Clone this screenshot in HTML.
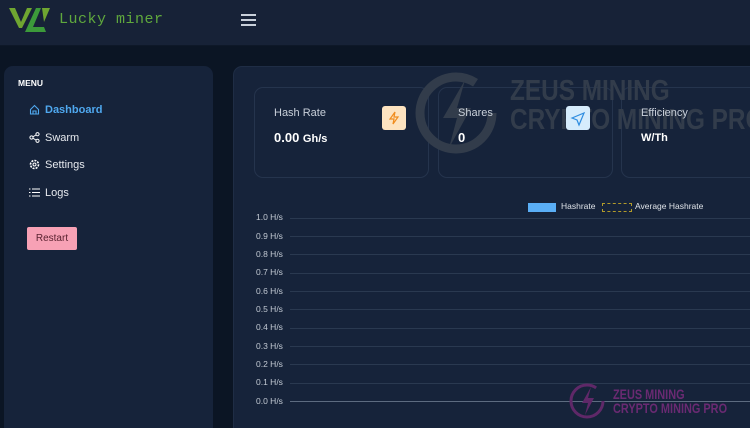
<!DOCTYPE html>
<html><head><style>
html,body{margin:0;width:750px;height:428px;overflow:hidden}
body{background:#0b1524;font-family:"Liberation Sans",sans-serif}
#w{position:relative;width:750px;height:428px;overflow:hidden}
.hdr{position:absolute;left:0;top:0;width:750px;height:45px;background:#172237;border-bottom:1px solid #0e1828}
.side{position:absolute;left:4px;top:66px;width:209px;height:370px;background:#16233a;border-radius:9px}
.main{position:absolute;left:233px;top:66px;width:530px;height:370px;background:#16233a;border-radius:9px;border:1px solid #1f2d45}
.card{position:absolute;top:20px;height:89px;border:1px solid #25344d;border-radius:9px}
.t{position:absolute;color:#c9d0da;font-size:11px}
.v{position:absolute;color:#fff;font-size:13px;font-weight:bold}
.ic{position:absolute;width:24px;height:24px;border-radius:3px}
.m{position:absolute;font-size:11px;color:#e6e9ee}
.mi{position:absolute;left:25px}
.gl{position:absolute;left:290px;width:460px;height:1px;background:#2a3950}
.gt{position:absolute;left:256px;font-size:8.5px;color:#c2c9d3}
</style></head><body><div id="w">
<div class="hdr">
<svg style="position:absolute;left:8px;top:4px" width="45" height="30" viewBox="0 0 45 30"><path d="M1 4h6l6 14 6-14h5l-10 20h-3z" fill="#6fa631"/><path d="M17 28l11-24h5l-8 19h11l2 5z" fill="#3c9a3a"/><path d="M34 4h8l-6 14z" fill="#6fa631"/></svg>
<div style="position:absolute;left:59px;top:11px;color:#5fa83d;font-family:'Liberation Mono',monospace;font-size:15px;letter-spacing:0.5px">Lucky miner</div>
<div style="position:absolute;left:241px;top:14px;width:15px">
<div style="height:2px;background:#c9d0da;margin-bottom:3px"></div><div style="height:2px;background:#c9d0da;margin-bottom:3px"></div><div style="height:2px;background:#c9d0da"></div></div>
</div>
<div class="side">
<div style="position:absolute;left:14px;top:12px;color:#fff;font-size:8.5px;font-weight:bold">MENU</div>
<svg class="mi" style="top:38px" width="11" height="11" viewBox="0 0 11 11"><path d="M1.5 5.5L5.5 1.5 9.5 5.5V10H1.5z M4 10V7h3v3" fill="none" stroke="#4fa8ef" stroke-width="1.1"/></svg>
<div class="m" style="left:41px;top:38px;color:#4fa8ef;font-weight:bold">Dashboard</div>
<svg class="mi" style="top:66px" width="11" height="11" viewBox="0 0 11 11"><circle cx="2.5" cy="5.5" r="1.6" fill="none" stroke="#fff"/><circle cx="8.5" cy="2.2" r="1.6" fill="none" stroke="#fff"/><circle cx="8.5" cy="8.8" r="1.6" fill="none" stroke="#fff"/><path d="M4 4.7l3-1.7M4 6.3l3 1.7" stroke="#fff"/></svg>
<div class="m" style="left:41px;top:66px">Swarm</div>
<svg class="mi" style="top:93px" width="11" height="11" viewBox="0 0 11 11"><circle cx="5.5" cy="5.5" r="4" fill="none" stroke="#fff" stroke-width="1.6" stroke-dasharray="2 1.1"/><circle cx="5.5" cy="5.5" r="1.5" fill="none" stroke="#fff"/></svg>
<div class="m" style="left:41px;top:93px">Settings</div>
<svg class="mi" style="top:121px" width="11" height="11" viewBox="0 0 11 11"><path d="M0 2h1.5M0 5.5h1.5M0 9h1.5M3 2h8M3 5.5h8M3 9h8" stroke="#fff" stroke-width="1.1"/></svg>
<div class="m" style="left:41px;top:121px">Logs</div>
<div style="position:absolute;left:23px;top:161px;width:50px;height:23px;background:#f7a1b5;border-radius:2px;color:#5a2230;font-size:10px;text-align:center;line-height:23px">Restart</div>
</div>
<div class="main">
<div class="card" style="left:20px;width:173px"></div>
<div class="card" style="left:204px;width:173px"></div>
<div class="card" style="left:387px;width:200px"></div>
</div>
<svg style="position:absolute;left:413px;top:68px" width="90" height="90" viewBox="0 0 90 90"><circle cx="43" cy="45" r="36" fill="none" stroke="#323c4b" stroke-width="9" stroke-dasharray="190 36"/><path d="M52 12L30 50h14l-8 30 22-40H44z" fill="#323c4b"/></svg>
<div style="position:absolute;left:510px;top:77px;color:#323c4b;font-size:29px;font-weight:bold;line-height:29px;white-space:nowrap;transform:scaleX(0.84);transform-origin:0 0">ZEUS MINING<br>CRYPTO MINING PRO</div>
<div class="t" style="left:274px;top:107px">Hash Rate</div>
<div class="v" style="left:274px;top:130px">0.00 <span style="font-size:11px">Gh/s</span></div>
<div class="ic" style="left:382px;top:106px;background:#fde3c0"><svg width="24" height="24"><path d="M13 6l-5 7h4l-1 5 5-7h-4z" fill="none" stroke="#f08c1e" stroke-width="1.2"/></svg></div>
<div class="t" style="left:458px;top:107px">Shares</div>
<div class="v" style="left:458px;top:130px">0</div>
<div class="ic" style="left:566px;top:106px;background:#d6ecfc"><svg width="24" height="24"><path d="M6 12l12-5-5 12-2-5z" fill="none" stroke="#2f8de0" stroke-width="1.2"/></svg></div>
<div class="t" style="left:641px;top:107px">Efficiency</div>
<div class="v" style="left:641px;top:132px;font-size:11px">W/Th</div>
<div style="position:absolute;left:528px;top:203px;width:28px;height:9px;background:#5aaef5"></div>
<div style="position:absolute;left:561px;top:201px;font-size:8.5px;color:#dfe3e8">Hashrate</div>
<div style="position:absolute;left:602px;top:203px;width:28px;height:7px;border:1px dashed #b19a2a"></div>
<div style="position:absolute;left:635px;top:201px;font-size:8.5px;color:#dfe3e8">Average Hashrate</div>
<div class="gl" style="top:218px"></div><div class="gt" style="top:212px">1.0 H/s</div>
<div class="gl" style="top:236px"></div><div class="gt" style="top:231px">0.9 H/s</div>
<div class="gl" style="top:254px"></div><div class="gt" style="top:249px">0.8 H/s</div>
<div class="gl" style="top:273px"></div><div class="gt" style="top:267px">0.7 H/s</div>
<div class="gl" style="top:291px"></div><div class="gt" style="top:286px">0.6 H/s</div>
<div class="gl" style="top:309px"></div><div class="gt" style="top:304px">0.5 H/s</div>
<div class="gl" style="top:328px"></div><div class="gt" style="top:322px">0.4 H/s</div>
<div class="gl" style="top:346px"></div><div class="gt" style="top:341px">0.3 H/s</div>
<div class="gl" style="top:364px"></div><div class="gt" style="top:359px">0.2 H/s</div>
<div class="gl" style="top:383px"></div><div class="gt" style="top:377px">0.1 H/s</div>
<div class="gl" style="top:401px;background:#5d6b80"></div><div class="gt" style="top:396px">0.0 H/s</div>
<svg style="position:absolute;left:568px;top:381px" width="40" height="40" viewBox="0 0 40 40"><circle cx="19" cy="20" r="16" fill="none" stroke="#5f2868" stroke-width="3" stroke-dasharray="85 16"/><path d="M23 6l-9 16h6l-3 12 9-17h-6z" fill="#5f2868"/></svg>
<div style="position:absolute;left:613px;top:387px;color:#6a2a72;font-size:14px;font-weight:bold;line-height:14px;white-space:nowrap;transform:scaleX(0.78);transform-origin:0 0">ZEUS MINING<br>CRYPTO MINING PRO</div>
</div></body></html>
